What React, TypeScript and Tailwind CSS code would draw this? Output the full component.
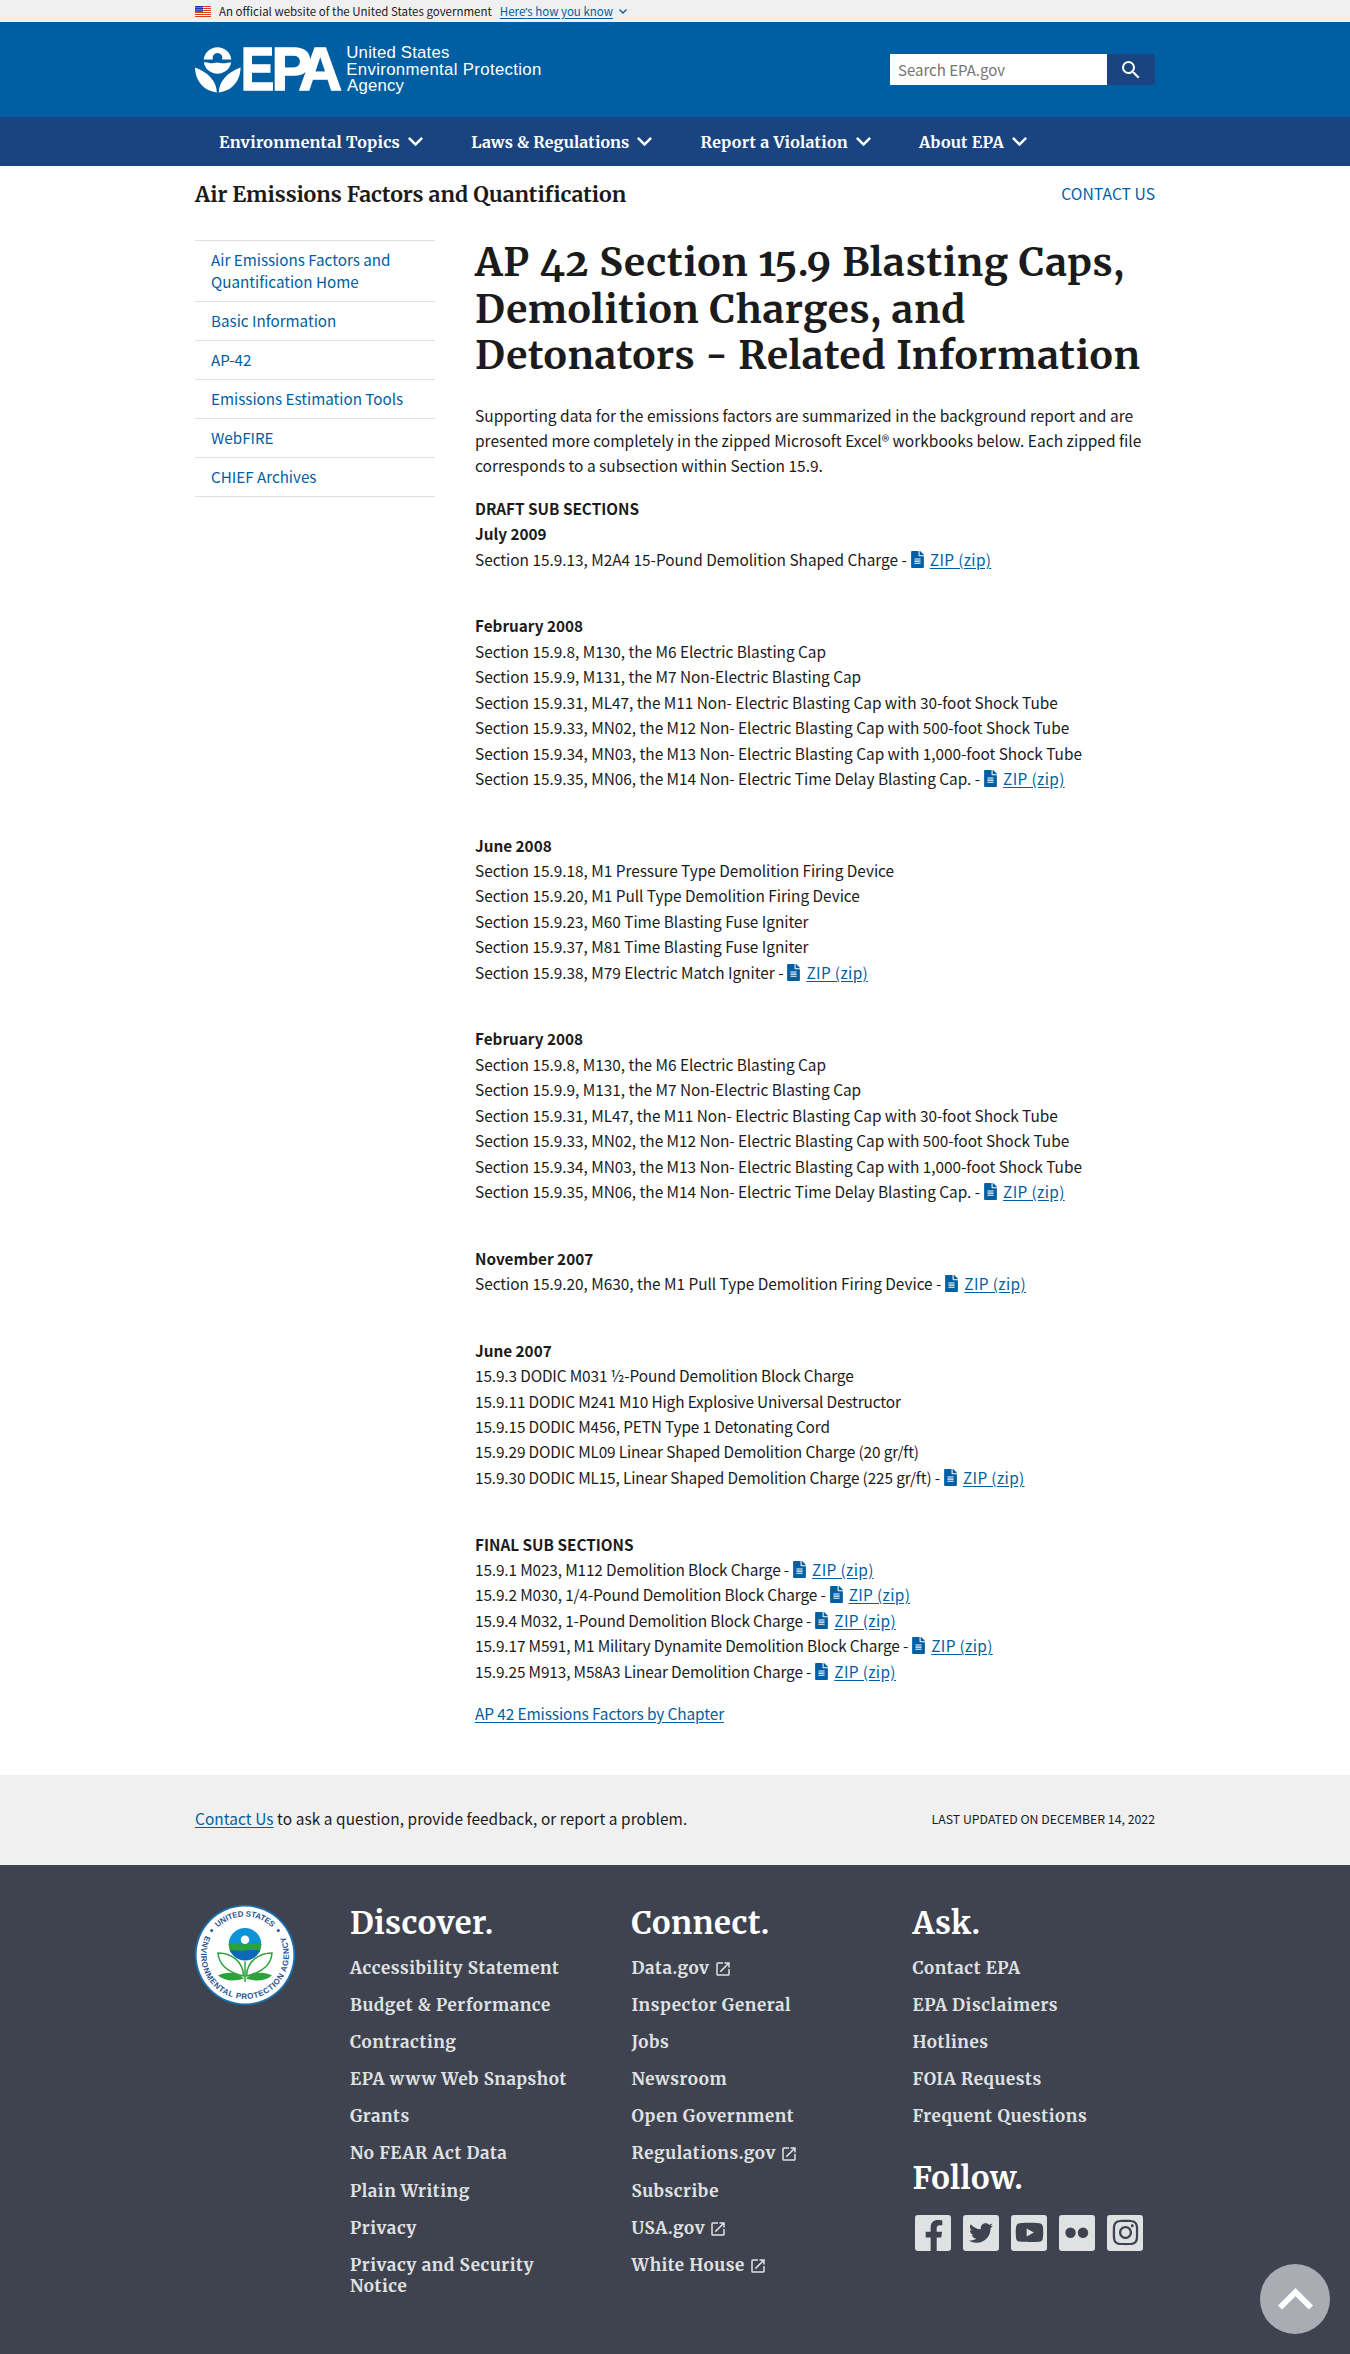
import type { ReactNode } from "react";
import { FaFacebookF, FaFileAlt, FaInstagram, FaTwitter, FaYoutube } from "react-icons/fa";
import { MdOpenInNew, MdSearch } from "react-icons/md";

type Line = { text: string; zip?: boolean };
type Group = { title: string; lines: Line[]; tight?: boolean };

const february: Line[] = [
  { text: "Section 15.9.8, M130, the M6 Electric Blasting Cap" },
  { text: "Section 15.9.9, M131, the M7 Non-Electric Blasting Cap" },
  { text: "Section 15.9.31, ML47, the M11 Non- Electric Blasting Cap with 30-foot Shock Tube" },
  { text: "Section 15.9.33, MN02, the M12 Non- Electric Blasting Cap with 500-foot Shock Tube" },
  { text: "Section 15.9.34, MN03, the M13 Non- Electric Blasting Cap with 1,000-foot Shock Tube" },
  { text: "Section 15.9.35, MN06, the M14 Non- Electric Time Delay Blasting Cap. -", zip: true },
];

const groups: Group[] = [
  { title: "July 2009", lines: [{ text: "Section 15.9.13, M2A4 15-Pound Demolition Shaped Charge -", zip: true }] },
  { title: "February 2008", lines: february },
  {
    title: "June 2008",
    lines: [
      { text: "Section 15.9.18, M1 Pressure Type Demolition Firing Device" },
      { text: "Section 15.9.20, M1 Pull Type Demolition Firing Device" },
      { text: "Section 15.9.23, M60 Time Blasting Fuse Igniter" },
      { text: "Section 15.9.37, M81 Time Blasting Fuse Igniter" },
      { text: "Section 15.9.38, M79 Electric Match Igniter -", zip: true },
    ],
  },
  { title: "February 2008", lines: february },
  {
    title: "November 2007",
    lines: [{ text: "Section 15.9.20, M630, the M1 Pull Type Demolition Firing Device -", zip: true }],
  },
  {
    title: "June 2007",
    tight: true,
    lines: [
      { text: "15.9.3 DODIC M031 ½-Pound Demolition Block Charge" },
      { text: "15.9.11 DODIC M241 M10 High Explosive Universal Destructor" },
      { text: "15.9.15 DODIC M456, PETN Type 1 Detonating Cord" },
      { text: "15.9.29 DODIC ML09 Linear Shaped Demolition Charge (20 gr/ft)" },
      { text: "15.9.30 DODIC ML15, Linear Shaped Demolition Charge (225 gr/ft) -", zip: true },
    ],
  },
  {
    title: "FINAL SUB SECTIONS",
    tight: true,
    lines: [
      { text: "15.9.1 M023, M112 Demolition Block Charge -", zip: true },
      { text: "15.9.2 M030, 1/4-Pound Demolition Block Charge -", zip: true },
      { text: "15.9.4 M032, 1-Pound Demolition Block Charge -", zip: true },
      { text: "15.9.17 M591, M1 Military Dynamite Demolition Block Charge -", zip: true },
      { text: "15.9.25 M913, M58A3 Linear Demolition Charge -", zip: true },
    ],
  },
];

const discover = [
  "Accessibility Statement",
  "Budget & Performance",
  "Contracting",
  "EPA www Web Snapshot",
  "Grants",
  "No FEAR Act Data",
  "Plain Writing",
  "Privacy",
  "Privacy and Security Notice",
];
const connect = [
  "Data.gov",
  "Inspector General",
  "Jobs",
  "Newsroom",
  "Open Government",
  "Regulations.gov",
  "Subscribe",
  "USA.gov",
  "White House",
];
const external = ["Data.gov", "Regulations.gov", "USA.gov", "White House"];
const ask = ["Contact EPA", "EPA Disclaimers", "Hotlines", "FOIA Requests", "Frequent Questions"];
const sideLinks = [
  "Air Emissions Factors and Quantification Home",
  "Basic Information",
  "AP-42",
  "Emissions Estimation Tools",
  "WebFIRE",
  "CHIEF Archives",
];

const serif = "font-['Merriweather','Noto_Serif','DejaVu_Serif_Condensed',serif] font-bold";

function Chevron({ className }: { className: string }) {
  return (
    <svg viewBox="0 0 12 7.41" className={className} fill="currentColor">
      <path d="M1.41 0 6 4.58 10.59 0 12 1.41l-6 6-6-6z" />
    </svg>
  );
}

function Flag() {
  return (
    <svg viewBox="0 0 16 11" className="h-[11px] w-4">
      <rect width="16" height="11" fill="#fff" />
      {[0, 2, 4, 6, 8, 10].map((y) => (
        <rect key={y} y={y} width="16" height="1" fill="#db3e1f" />
      ))}
      <rect width="8" height="6" fill="#1e33b1" />
      {[1, 3, 5, 7].map((x) => (
        <g key={x} fill="#fff">
          <rect x={x - 0.4} y="1" width="0.8" height="0.8" />
          <rect x={x - 0.4} y="3" width="0.8" height="0.8" />
          <rect x={x - 0.4} y="4.7" width="0.8" height="0.8" />
        </g>
      ))}
    </svg>
  );
}

function Logo() {
  return (
    <svg viewBox="0 -12 350 76" className="h-[76px] w-[350px]" fill="#fff">
      <g transform="translate(0 1)">
        <path d="M8.7 14.6a13.9 13.9 0 0 1 27.6 0h-9.200a4.900 4.900 0 1 0-9.200 0z" />
        <path d="M8.800 17.600c3-.8 4.500.7 7 .7s4-.9 6.500-.9 4 1 6.500.9 4-1.400 7.400-.7c-1.200 6.500-6.800 11.200-13.700 11.200S10 24.100 8.800 17.600z" />
        <path d="M0 22.500c13.500 4.800 21.600 14 21.800 24.900C9.500 46 .3 36.800 0 22.500z" />
        <path d="M45.600 22.500c-13.500 4.800-21.600 14-21.800 24.900 12.300-1.400 21.500-10.600 21.800-24.900z" />
      </g>
      <g
        stroke="#fff"
        strokeWidth="1.600"
        fontSize="61"
        className="font-['Liberation_Sans',sans-serif] font-bold"
      >
        <text x="45.800" y="46.400" textLength="33.500" lengthAdjust="spacingAndGlyphs">E</text>
        <text x="76.500" y="46.400" textLength="40" lengthAdjust="spacingAndGlyphs">P</text>
        <text x="103.500" y="46.400" textLength="43.500" lengthAdjust="spacingAndGlyphs">A</text>
      </g>
      <g fontSize="16.800" className="font-['Liberation_Sans',sans-serif]">
        <text x="151.300" y="14.300" textLength="103">United States</text>
        <text x="151.300" y="30.800" textLength="195">Environmental Protection</text>
        <text x="152" y="47.300" textLength="57">Agency</text>
      </g>
    </svg>
  );
}

function Seal() {
  return (
    <svg viewBox="-51 -51 102 102" className="h-[102px] w-[102px]">
      <defs>
        <path id="seal-top" d="M-38.500 0A38.500 38.500 0 0 1 38.500 0" />
        <path id="seal-bottom" d="M-39.500 -19.300A44 44 0 1 0 39.500 -19.300" />
        <clipPath id="seal-globe">
          <circle cy="-10.700" r="16.300" />
        </clipPath>
      </defs>
      <circle r="50.300" fill="#1a6fad" />
      <circle r="48.400" fill="#fff" />
      <g fill="#2a5590" fontSize="8" className="font-['Liberation_Sans',sans-serif] font-bold">
        <text textLength="60" textAnchor="middle">
          <textPath href="#seal-top" startOffset="50%">UNITED STATES</textPath>
        </text>
        <text textLength="177">
          <textPath href="#seal-bottom">ENVIRONMENTAL PROTECTION AGENCY</textPath>
        </text>
        <circle cx="-33.300" cy="-24.500" r="1.500" />
        <circle cx="33.300" cy="-24.500" r="1.500" />
      </g>
      <g clipPath="url(#seal-globe)">
        <rect x="-17" y="-28" width="34" height="18" fill="#0a94d6" />
        <path d="M-17-11c6-1.500 10 1 17 0s12-.8 17 0v8h-34z" fill="#2ba33a" />
        <path d="M-17-4.500c6-1 12 .8 17 0s12-.8 17 0V7h-34z" fill="#0b67b8" />
        <circle cy="-15.200" r="4.300" fill="#fff" />
      </g>
      <g stroke="#2ba33a" strokeWidth="1.500" fill="#fff">
        <path d="M0 6.500V27" />
        <path d="M-27-2C-14-2-2 6-1.500 21-14 18-26 12-27-2z" />
        <path d="M27-2C14-2 2 6 1.500 21 14 18 26 12 27-2z" />
      </g>
      <path d="M-27 20.500c9-4.500 19-3.500 26 3-9 3-19 3-26-3zM27 20.500c-9-4.500-19-3.500-26 3 9 3 19 3 26-3z" fill="#2ba33a" />
    </svg>
  );
}

function ZipLink() {
  return (
    <>
      <FaFileAlt className="relative -top-px ml-1 inline h-[17px] w-[13px] align-[-3px] text-[#005ea2]" />
      <a className="ml-1.5 tracking-[0.350px] text-[#005ea2] underline underline-offset-2">ZIP (zip)</a>
    </>
  );
}

function FooterColumn({ title, children }: { title: string; children: ReactNode }) {
  return (
    <div>
      <h3 className={`${serif} text-[31px] leading-[37px] tracking-[0.450px] text-white`}>{title}</h3>
      {children}
    </div>
  );
}

function FooterLinks({ items }: { items: string[] }) {
  return (
    <ul className={`${serif} mt-[17px] flex flex-col gap-[15.900px] text-[17px] leading-[21.200px] tracking-[0.580px] text-[#dfe1e2]`}>
      {items.map((item) => (
        <li key={item}>
          {item}
          {external.includes(item) && <MdOpenInNew className="ml-1 inline size-[18px] align-[-4px]" />}
        </li>
      ))}
    </ul>
  );
}

function SocialTile({ children }: { children: ReactNode }) {
  return (
    <a className="flex size-9 items-center justify-center overflow-hidden rounded-[3px] bg-[#dfe1e2] text-[#3f434f]">
      {children}
    </a>
  );
}

export default function App() {
  return (
    <div className="relative flex h-[2354px] flex-col overflow-hidden bg-white font-['Noto_Sans_CJK_SC','Noto_Sans',sans-serif] text-[15.400px] leading-[25.440px] text-[#1b1b1b]">
      <div className="h-[22px] bg-[#f0f0f0]">
        <div className="mx-auto flex h-full w-[960px] items-center pt-px text-[11.500px] leading-none">
          <Flag />
          <span className="ml-2">An official website of the United States government</span>
          <a className="ml-2 text-[#005ea2] underline underline-offset-2">
            Here<span className="font-['Noto_Sans']">’</span>s how you know
          </a>
          <Chevron className="ml-1.5 w-2 text-[#005ea2]" />
        </div>
      </div>

      <header className="h-[95px] bg-[#005ea2]">
        <div className="mx-auto flex w-[960px] items-start justify-between">
          <div className="pt-2.5">
            <Logo />
          </div>
          <div className="mt-8 flex h-[31px] w-[265px]">
            <div className="flex flex-1 items-center bg-white pl-2 text-[15px] leading-none text-[#757575]">
              Search EPA.gov
            </div>
            <button className="flex w-12 items-center justify-center rounded-r bg-[#1a4480] text-white">
              <MdSearch className="size-6" />
            </button>
          </div>
        </div>
      </header>

      <nav className="h-[49px] bg-[#1a4480]">
        <div className={`${serif} mx-auto flex h-full w-[960px] items-center gap-[48px] pl-6 text-[16px] leading-none tracking-[0.280px] text-white`}>
          {["Environmental Topics", "Laws & Regulations", "Report a Violation", "About EPA"].map((t) => (
            <a key={t} className="flex items-center gap-2">
              <span className={t.includes("&") ? "tracking-[0.120px]" : ""}>{t}</span>
              <Chevron className="w-[15px]" />
            </a>
          ))}
        </div>
      </nav>

      <div className="mx-auto flex h-[74px] w-[960px] justify-between pt-4">
        <h2 className={`${serif} text-[21.300px]`}>Air Emissions Factors and Quantification</h2>
        <a className="-mt-px text-[15.700px] text-[#005ea2]">CONTACT US</a>
      </div>

      <div className="mx-auto flex w-[960px] flex-1 gap-10">
        <ul className="w-60 text-[15.200px] leading-[22px] text-[#005ea2]">
          {sideLinks.map((l) => (
            <li key={l} className="border-t border-[#dfe1e2] px-4 pt-[7px] pb-[9px] last:border-b">
              {l}
            </li>
          ))}
        </ul>
        <main className="w-[680px]">
          <h1 className={`${serif} text-[39px] leading-[46.500px] tracking-[0.680px] oldstyle-nums [font-feature-settings:'onum']`}>
            AP 42 Section 15.9 Blasting Caps,
            <br />
            Demolition Charges, and
            <br />
            Detonators - Related Information
          </h1>
          <p className="mt-[23px] text-[15.500px]">
            Supporting data for the emissions factors are summarized in the background report and are
            <br />
            presented more completely in the zipped Microsoft Excel® workbooks below. Each zipped file
            <br />
            corresponds to a subsection within Section 15.9.
          </p>
          <div className="mt-[17px]">
            <b className="block text-[15.300px]">DRAFT SUB SECTIONS</b>
            <div className="flex flex-col gap-[41.200px]">
              {groups.map((g, i) => (
                <div key={i} className={g.tight ? "tracking-[-0.140px]" : "tracking-[-0.020px]"}>
                  <b className="block text-[15.300px] tracking-normal">{g.title}</b>
                  {g.lines.map((l) => (
                    <div key={l.text} className="h-[25.440px] whitespace-nowrap">
                      {l.text}
                      {l.zip && <ZipLink />}
                    </div>
                  ))}
                </div>
              ))}
            </div>
          </div>
          <a className="mt-[16.500px] block tracking-[-0.100px] text-[#005ea2] underline underline-offset-2">
            AP 42 Emissions Factors by Chapter
          </a>
        </main>
      </div>

      <div className="h-[90px] bg-[#f0f0f0]">
        <div className="mx-auto flex h-full w-[960px] items-center justify-between">
          <p className="-mt-0.5 tracking-[0.075px]">
            <a className="text-[#005ea2] underline underline-offset-2">Contact Us</a> to ask a question, provide feedback, or report a problem.
          </p>
          <p className="text-[12.300px]">LAST UPDATED ON DECEMBER 14, 2022</p>
        </div>
      </div>

      <footer className="h-[489px] bg-[#3f434f]">
        <div className="mx-auto flex w-[960px] pt-[39px]">
          <div className="-ml-px w-[156px]">
            <Seal />
          </div>
          <div className="grid grid-cols-[281.500px_281px_242px]">
            <FooterColumn title="Discover.">
              <div className="w-[230px]">
                <FooterLinks items={discover} />
              </div>
            </FooterColumn>
            <FooterColumn title="Connect.">
              <FooterLinks items={connect} />
            </FooterColumn>
            <FooterColumn title="Ask.">
              <FooterLinks items={ask} />
              <h3 className={`${serif} mt-[31px] text-[31px] leading-[37px] tracking-[0.450px] text-white`}>Follow.</h3>
              <div className="mt-[19px] flex gap-3 pl-[2.500px]">
                <SocialTile>
                  <FaFacebookF className="mt-1.5 ml-px h-[31px] w-5" />
                </SocialTile>
                <SocialTile>
                  <FaTwitter className="size-6" />
                </SocialTile>
                <SocialTile>
                  <FaYoutube className="size-[29px]" />
                </SocialTile>
                <SocialTile>
                  <svg viewBox="0 0 36 36" className="size-9" fill="currentColor">
                    <circle cx="11.500" cy="17.700" r="5.200" />
                    <circle cx="24" cy="17.700" r="5.200" />
                  </svg>
                </SocialTile>
                <SocialTile>
                  <FaInstagram className="size-[29px]" />
                </SocialTile>
              </div>
            </FooterColumn>
          </div>
        </div>
      </footer>

      <a className="absolute top-[2264px] left-[1260px] flex size-[70px] items-center justify-center rounded-full bg-[#a9adb3] text-white">
        <Chevron className="w-[35px] rotate-180" />
      </a>
    </div>
  );
}
